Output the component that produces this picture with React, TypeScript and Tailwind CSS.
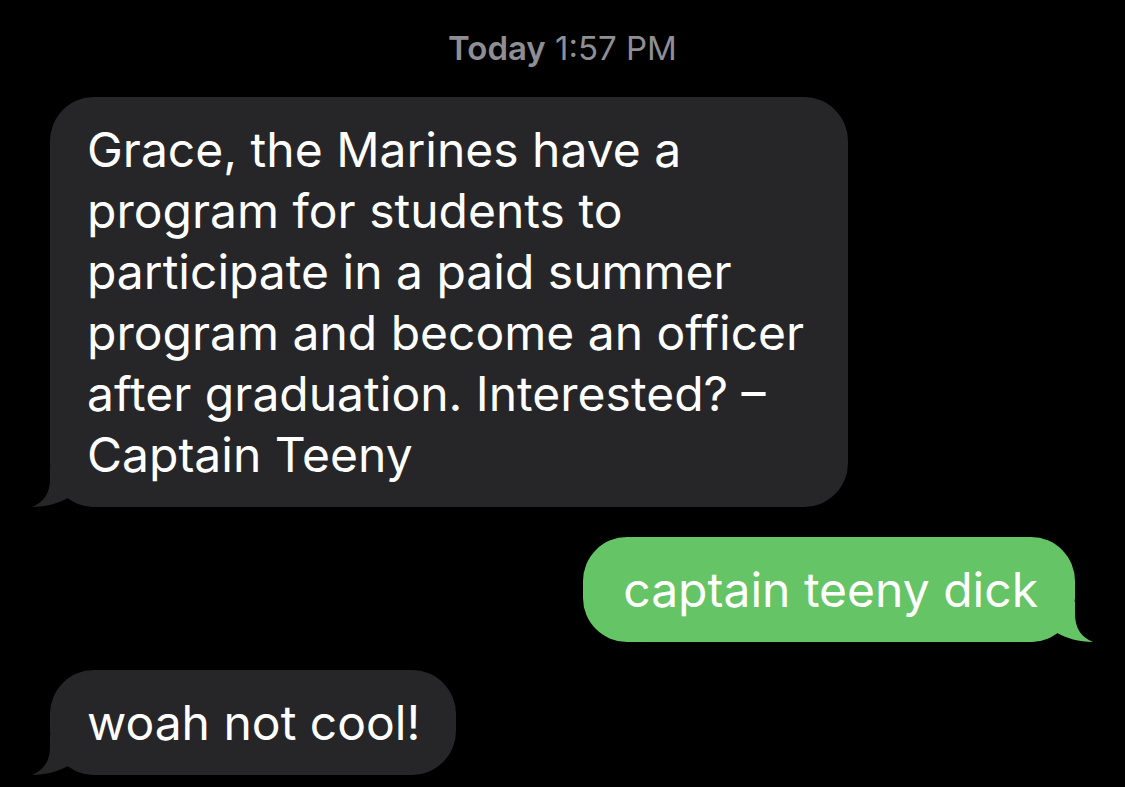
import React from "react";

function Tail({ side, color }: { side: "left" | "right"; color: string }) {
  // bubble tail hangs off the bottom corner
  return (
    <svg
      width={66}
      height={40}
      viewBox="0 0 66 40"
      className={
        side === "left"
          ? "absolute bottom-0 left-[-18px]"
          : "absolute bottom-0 right-[-18px] -scale-x-100"
      }
    >
      <path
        d="M18 0 L18 12 C18 26 12 35 0 40 C14 40 27 36 36 31 C44 36 54 40 66 40 L66 0 Z"
        fill={color}
      />
    </svg>
  );
}

function Bubble({
  lines,
  mine,
  className,
}: {
  lines: string[];
  mine?: boolean;
  className?: string;
}) {
  return (
    <div
      className={`relative rounded-[44px] py-[22px] text-[48px] leading-[61px] text-white whitespace-nowrap ${
        mine ? "bg-[#65c466] self-end" : "bg-[#262629] self-start"
      } ${className ?? ""}`}
    >
      <Tail side={mine ? "right" : "left"} color={mine ? "#65c466" : "#262629"} />
      <div className="relative">
        {lines.map((l) => (
          <div key={l}>{l}</div>
        ))}
      </div>
    </div>
  );
}

export default function App() {
  return (
    <div className="w-[1125px] h-[787px] overflow-hidden bg-black font-['Inter',sans-serif] antialiased">
      <div className="pt-[28px] text-center text-[33px] leading-[40px] text-[#8e8e93]">
        <span className="font-semibold">Today</span> 1:57 PM
      </div>
      <div className="flex flex-col px-[50px] mt-[29px]">
        <Bubble
          className="w-[798px] pl-[37px]"
          lines={[
            "Grace, the Marines have a",
            "program for students to",
            "participate in a paid summer",
            "program and become an officer",
            "after graduation. Interested? –",
            "Captain Teeny",
          ]}
        />
        <Bubble mine className="mt-[30px] pl-[40px] pr-[37px]" lines={["captain teeny dick"]} />
        <Bubble className="mt-[28px] pl-[37px] pr-[36px]" lines={["woah not cool!"]} />
      </div>
    </div>
  );
}
